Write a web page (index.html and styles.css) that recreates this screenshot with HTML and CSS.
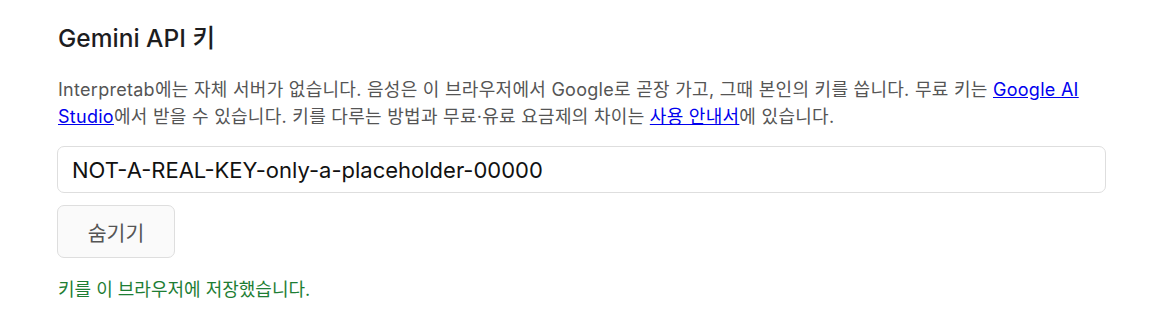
FILE: index.html
```html
<!DOCTYPE html>
<html lang="ko">
<head>
<meta charset="utf-8">
<link rel="stylesheet" href="styles.css">
</head>
<body>
<section class="panel">
  <h2 class="title">Gemini API 키</h2>
  <p class="desc">Interpretab에는 자체 서버가 없습니다. 음성은 이 브라우저에서 Google로 곧장 가고, 그때 본인의 키를 씁니다. 무료 키는 <a href="#">Google AI Studio</a>에서 받을 수 있습니다. 키를 다루는 방법과 무료·유료 요금제의 차이는 <a href="#">사용 안내서</a>에 있습니다.</p>
  <input class="key" type="text" value="NOT-A-REAL-KEY-only-a-placeholder-00000">
  <div class="actions"><button class="btn" type="button">숨기기</button></div>
  <p class="status">키를 이 브라우저에 저장했습니다.</p>
</section>
</body>
</html>
```
FILE: styles.css
```css
html, body {
  margin: 0;
  padding: 0;
  background: #ffffff;
}
body {
  font-family: Inter, "Noto Sans CJK KR", sans-serif;
  color: #222;
}
.panel {
  padding: 22px 59px 0 57px;
  display: flex;
  flex-direction: column;
}
.title {
  margin: 0 0 0 1px;
  font-size: 24.5px;
  font-weight: 500;
  line-height: 32px;
  color: #1d1d1f;
}
.desc {
  margin: 22px 0 0 1px;
  font-size: 18px;
  line-height: 27px;
  letter-spacing: 0.28px;
  color: #555;
}
.desc a {
  color: #0000ee;
  text-decoration: underline;
}
.key {
  margin: 16px 0 0 0;
  box-sizing: border-box;
  width: 100%;
  height: 47px;
  padding: 0 14px;
  border: 1.5px solid #dedede;
  border-radius: 7px;
  font-family: Inter, sans-serif;
  font-size: 22px;
  color: #111;
  background: #fff;
  outline: none;
}
.actions {
  display: flex;
  margin-top: 12px;
}
.btn {
  box-sizing: border-box;
  width: 118px;
  height: 53px;
  border: 1.5px solid #dedede;
  border-radius: 7px;
  background: #fafafa;
  font-family: Inter, "Noto Sans CJK KR", sans-serif;
  font-size: 20.5px;
  color: #555;
}
.status {
  margin: 18px 0 0 1px;
  font-size: 18px;
  line-height: 27px;
  color: #1e7e34;
}
```
